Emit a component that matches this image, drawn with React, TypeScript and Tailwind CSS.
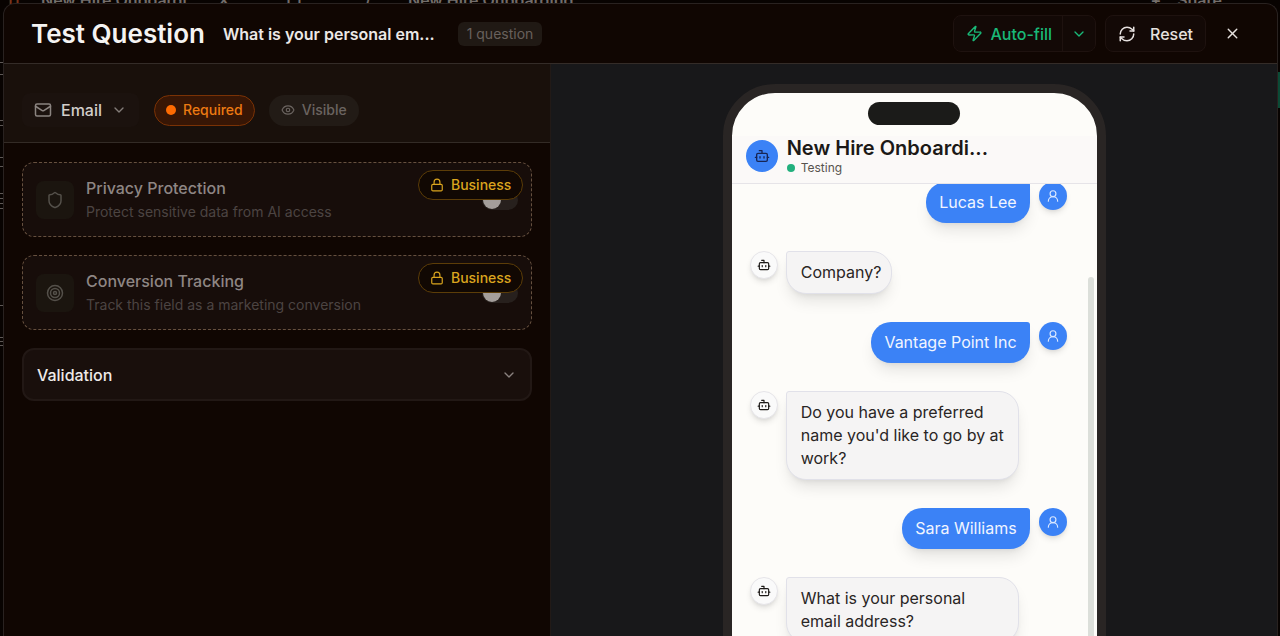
import React from "react";
import { Mail, ChevronDown, Eye, Shield, Target, Lock, Zap, RefreshCw, X, Bot, UserRound } from "lucide-react";

const font = "font-[Inter,'Liberation_Sans',sans-serif]";

const edgeMarks = [62, 74, 120, 125, 157, 166, 193, 198, 203, 208, 305, 337, 341, 345];

function LockedFeature({ id, icon, title, detail }: { id: string; icon: React.ReactNode; title: string; detail: string }) {
  return (
    <section className="relative flex h-[75px] items-center rounded-xl border border-dashed border-[#66503f] bg-[#170d0a] px-[13px]">
      <span className="flex size-[38px] items-center justify-center rounded-lg bg-[#1b150f] text-[#54504a]">{icon}</span>
      <label htmlFor={id} className="ml-3 flex flex-col gap-1">
        <span className="text-base leading-5 font-medium text-[#8e8684]">{title}</span>
        <span className="text-sm leading-5 text-[#4c4442]">{detail}</span>
      </label>
      <span className="relative ml-auto flex h-5 w-9 items-center rounded-full bg-[#27201d] px-px">
        <input id={id} type="checkbox" disabled className="absolute inset-0 appearance-none" />
        <span className="size-[18px] rounded-full bg-[#a49e9b]" />
      </span>
      <span className="absolute top-[7px] right-2 flex h-[30px] items-center gap-[7px] rounded-full border border-[#5c3d08] bg-[#110803] px-[11px] text-sm font-medium text-[#dba51e]">
        <Lock size={14} strokeWidth={2} />
        Business
      </span>
    </section>
  );
}

function BotMessage({ children }: { children: React.ReactNode }) {
  return (
    <div className="flex items-start gap-2 pl-[18px]">
      <span className="flex size-7 shrink-0 items-center justify-center rounded-full border border-[#e6e5e9] bg-[#fafafa] text-[#1c1917] shadow-md">
        <Bot size={14} />
      </span>
      <p className="max-w-[233px] rounded-[20px] rounded-tl-[3px] border border-[#e1e1e9] bg-[#f5f4f4] py-[9px] pr-[10px] pl-[14px] text-base leading-[23px] text-[#292524] shadow-lg">
        {children}
      </p>
    </div>
  );
}

function UserMessage({ children }: { children: React.ReactNode }) {
  return (
    <div className="flex items-start justify-end gap-[9px] pr-[30px]">
      <p className="rounded-[20px] rounded-tr-[3px] bg-[#3b82f6] px-[13px] py-[9px] text-base leading-[23px] text-[#f1f5ff] shadow-lg">
        {children}
      </p>
      <span className="flex size-7 shrink-0 items-center justify-center rounded-full bg-[#3b82f6] text-[#dbe8ff] shadow-md">
        <UserRound size={14} />
      </span>
    </div>
  );
}

export default function App() {
  return (
    <div className={`relative flex h-screen overflow-hidden bg-[#080301] pt-[3px] pr-[2px] pl-[3px] ${font}`}>
      <div className="absolute inset-x-0 top-[-9px] flex text-base leading-[18px] font-semibold text-[#746e6b]">
        <span className="w-[41px] pl-2 text-[#7a341b]">[]</span>
        <span className="w-[177px]">New Hire Onboardi...</span>
        <span className="w-[68px]">X</span>
        <span className="w-[79px]">[ ]</span>
        <span className="w-[43px]">/</span>
        <span>New Hire Onboarding</span>
        <span className="ml-auto pr-4">+</span>
        <span className="pr-[58px]">Share</span>
      </div>
      {edgeMarks.map((y) => (
        <span key={y} className="absolute left-0 h-px w-[3px] bg-[#5f5956]" style={{ top: y }} />
      ))}
      <span className="absolute top-[72px] right-0 h-[36px] w-[2px] bg-[#0b4a36]" />

      <main className="relative flex min-w-0 grow flex-col overflow-hidden rounded-t-xl border border-b-0 border-[#292220] bg-[#100602]">
        <header className="flex h-[60px] shrink-0 items-center border-b border-[#342c28] pr-9 pl-[27px]">
          <h1 className="text-[26px] leading-8 font-semibold text-[#f5f3f2]">Test Question</h1>
          <p className="ml-[18px] text-base font-semibold text-[#ece8e6]">What is your personal em...</p>
          <span className="ml-[23px] flex h-6 items-center rounded-md bg-[#201914] px-[9px] text-sm text-[#68605c]">1 question</span>
          <div className="ml-auto flex h-[37px] items-stretch rounded-lg border border-[#1e120f] bg-[#130906] text-[#19b978]">
            <button className="flex items-center gap-[7px] border-r border-[#1e120f] pr-[10px] pl-3 text-base font-medium">
              <Zap size={17} />
              Auto-fill
            </button>
            <button aria-label="Auto-fill options" className="px-2">
              <ChevronDown size={16} />
            </button>
          </div>
          <button className="ml-[9px] flex h-[37px] items-center gap-[14px] rounded-lg border border-[#1e120f] bg-[#130906] px-3 text-base font-medium text-[#e6e1df]">
            <RefreshCw size={18} />
            Reset
          </button>
          <button aria-label="Close" className="ml-[18px] text-[#e6e1df]">
            <X size={17} />
          </button>
        </header>

        <div className="flex min-h-0 grow">
          <aside className="w-[43%] shrink-0 border-r border-[#221a17]">
            <div className="flex h-[79px] items-center border-b border-[#332b26] bg-[#19100b] pt-[14px] pl-[18px]">
              <button className="flex h-[34px] items-center rounded-lg bg-[#1b120e] px-3 text-base font-medium text-[#d2cdca]">
                <Mail size={18} className="text-[#8b8480]" />
                <span className="ml-[9px]">Email</span>
                <ChevronDown size={16} className="ml-[9px] text-[#847d79]" />
              </button>
              <button className="ml-[15px] flex h-[31px] items-center gap-[7px] rounded-full border border-[#7a3205] bg-[#371605] px-[11px] text-sm font-medium text-[#ec7a12]">
                <span className="size-[10px] rounded-full bg-[#fe6b02]" />
                Required
              </button>
              <button className="ml-[14px] flex h-[31px] items-center gap-[7px] rounded-full bg-[#221b16] px-3 text-sm font-medium text-[#6b6460]">
                <Eye size={14} />
                Visible
              </button>
            </div>
            <div className="flex flex-col gap-[18px] py-[19px] pr-[18px] pl-[18px]">
              <LockedFeature id="privacy" icon={<Shield size={18} />} title="Privacy Protection" detail="Protect sensitive data from AI access" />
              <LockedFeature id="conversion" icon={<Target size={18} />} title="Conversion Tracking" detail="Track this field as a marketing conversion" />
              <button className="flex h-[53px] items-center justify-between rounded-xl border-2 border-[#221815] bg-[#190f0c] px-[13px] text-base font-medium text-[#eeeae8]">
                Validation
                <ChevronDown size={16} className="text-[#8a827f]" />
              </button>
            </div>
          </aside>

          <section className="flex min-w-0 grow justify-center overflow-hidden bg-[#18181a] pt-5">
            <div className="flex h-[760px] w-[383px] shrink-0 flex-col overflow-hidden rounded-[52px] border-[9px] border-[#292524] bg-[#fdfcf9]">
              <div className="flex h-[43px] shrink-0 items-start justify-center pt-[9px]">
                <span className="h-[23px] w-[92px] rounded-full bg-[#1b1b19]" />
              </div>
              <div className="flex h-12 shrink-0 items-center gap-[9px] border-b border-[#e6e4e8] bg-[#fbf9f8] pb-[7px] pl-[14px]">
                <span className="flex size-8 items-center justify-center rounded-full bg-[#3b82f6] text-[#172554]">
                  <Bot size={16} />
                </span>
                <div>
                  <h2 className="text-xl leading-6 font-semibold text-[#1c1917]">New Hire Onboardi...</h2>
                  <p className="flex items-center gap-[6px] text-xs leading-4 text-[#57534e]">
                    <span className="size-2 rounded-full bg-[#22b07d]" />
                    Testing
                  </p>
                </div>
              </div>
              <div className="relative flex min-h-0 grow overflow-hidden">
                <div className="-mt-[2px] flex min-w-0 grow flex-col gap-7">
                  <UserMessage>Lucas Lee</UserMessage>
                  <BotMessage>Company?</BotMessage>
                  <UserMessage>Vantage Point Inc</UserMessage>
                  <BotMessage>Do you have a preferred name you&apos;d like to go by at work?</BotMessage>
                  <UserMessage>Sara Williams</UserMessage>
                  <BotMessage>What is your personal email address?</BotMessage>
                </div>
                <span className="absolute top-[93px] right-[3px] bottom-0 w-[6px] rounded-full bg-[#dcdfda]" />
              </div>
            </div>
          </section>
        </div>
      </main>
    </div>
  );
}
